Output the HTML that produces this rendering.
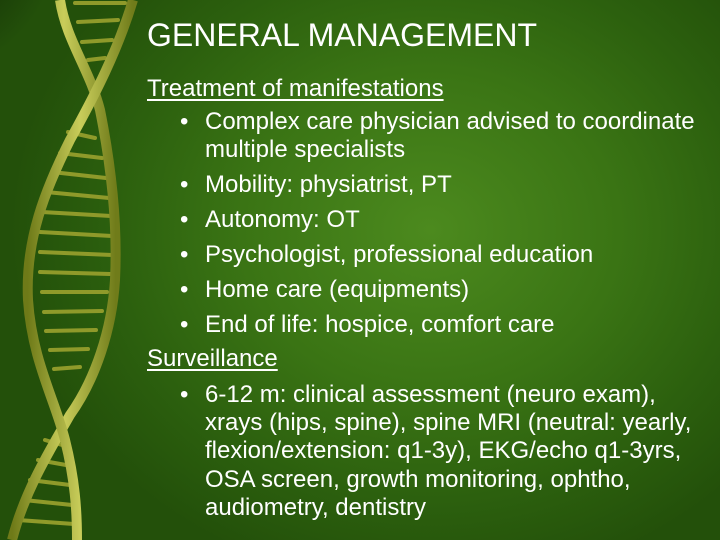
<!DOCTYPE html>
<html><head><meta charset="utf-8"><style>
html,body{margin:0;padding:0}
body{width:720px;height:540px;overflow:hidden;position:relative;font-family:"Liberation Sans",Arial,sans-serif;color:#fff;
background:radial-gradient(ellipse 420px 360px at 430px 230px,#4c8a1e 0%,#3a7414 45%,#2c600e 75%,#23500a 100%);}
.t{position:absolute;white-space:nowrap;font-size:24px;line-height:1}
.u{text-decoration:underline;text-decoration-thickness:2px;text-underline-offset:3px}
.b{position:absolute;font-size:24px;line-height:1;left:180px}
</style></head><body>
<svg width="720" height="540" style="position:absolute;left:0;top:0">
<defs>
<radialGradient id="dk" cx="0" cy="0" r="1"><stop offset="0" stop-color="#0a1a04" stop-opacity=".9"/><stop offset="1" stop-color="#0a1a04" stop-opacity="0"/></radialGradient>
<linearGradient id="s" x1="0" x2="1"><stop offset="0" stop-color="#6e7a18"/><stop offset=".5" stop-color="#c9cd5a"/><stop offset="1" stop-color="#707c1a"/></linearGradient>
</defs>
<ellipse cx="0" cy="0" rx="60" ry="70" fill="url(#dk)"/>
<g stroke="#8f9a2a" stroke-width="4" stroke-linecap="round">
<line x1="75" y1="3" x2="125" y2="3"/><line x1="78" y1="22" x2="118" y2="20"/><line x1="82" y1="42" x2="112" y2="40"/><line x1="88" y1="60" x2="105" y2="58"/>
<line x1="68" y1="132" x2="95" y2="138"/><line x1="60" y1="153" x2="102" y2="158"/><line x1="52" y1="172" x2="106" y2="178"/><line x1="46" y1="192" x2="109" y2="198"/><line x1="42" y1="212" x2="111" y2="216"/><line x1="40" y1="232" x2="112" y2="236"/><line x1="40" y1="252" x2="112" y2="255"/><line x1="40" y1="272" x2="110" y2="274"/><line x1="42" y1="292" x2="107" y2="292"/><line x1="44" y1="312" x2="102" y2="311"/><line x1="46" y1="331" x2="96" y2="330"/><line x1="50" y1="350" x2="88" y2="349"/><line x1="54" y1="369" x2="80" y2="367"/>
<line x1="45" y1="440" x2="62" y2="445"/><line x1="38" y1="460" x2="66" y2="465"/><line x1="30" y1="480" x2="70" y2="485"/><line x1="24" y1="500" x2="72" y2="505"/><line x1="18" y1="520" x2="74" y2="524"/>
</g>
<path d="M60 0 C66 40 90 70 100 110 C110 160 118 220 115 280 C112 330 95 380 70 415 C50 450 25 490 12 540" fill="none" stroke="url(#s)" stroke-width="10"/>
<path d="M133 0 C118 50 95 95 70 140 C45 190 25 240 28 300 C32 360 55 400 65 440 C75 480 77 510 77 540" fill="none" stroke="url(#s)" stroke-width="10"/>
</svg>
<div class="t" style="left:147px;top:19px;font-size:32px">GENERAL MANAGEMENT</div>
<div class="t u" style="left:147px;top:77px">Treatment of manifestations</div>
<div class="b" style="top:110px">•</div><div class="t" style="left:205px;top:110px">Complex care physician advised to coordinate</div>
<div class="t" style="left:205px;top:138px">multiple specialists</div>
<div class="b" style="top:173px">•</div><div class="t" style="left:205px;top:173px">Mobility: physiatrist, PT</div>
<div class="b" style="top:208px">•</div><div class="t" style="left:205px;top:208px">Autonomy: OT</div>
<div class="b" style="top:243px">•</div><div class="t" style="left:205px;top:243px">Psychologist, professional education</div>
<div class="b" style="top:278px">•</div><div class="t" style="left:205px;top:278px">Home care (equipments)</div>
<div class="b" style="top:313px">•</div><div class="t" style="left:205px;top:313px">End of life: hospice, comfort care</div>
<div class="t u" style="left:147px;top:347px">Surveillance</div>
<div class="b" style="top:383px">•</div><div class="t" style="left:205px;top:383px">6-12 m: clinical assessment (neuro exam),</div>
<div class="t" style="left:205px;top:411px">xrays (hips, spine), spine MRI (neutral: yearly,</div>
<div class="t" style="left:205px;top:439px">flexion/extension: q1-3y), EKG/echo q1-3yrs,</div>
<div class="t" style="left:205px;top:468px">OSA screen, growth monitoring, ophtho,</div>
<div class="t" style="left:205px;top:496px">audiometry, dentistry</div>
</body></html>
